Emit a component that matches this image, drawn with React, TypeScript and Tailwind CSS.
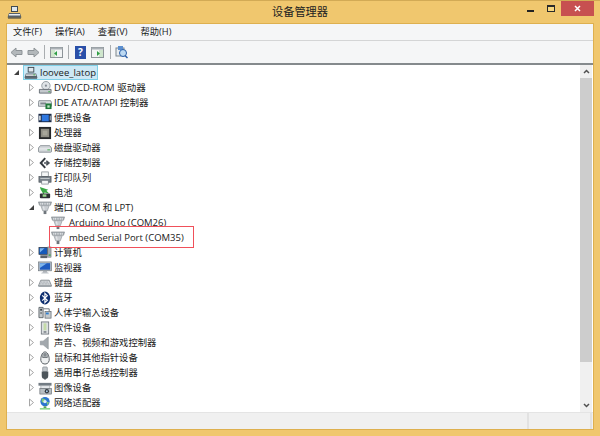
import type { ReactNode } from "react";

const uiFont = "font-['Open_Sans','Noto_Sans_CJK_SC',sans-serif]";

type IconName =
  | "computer" | "dvd" | "ide" | "portable" | "cpu" | "disk" | "storage" | "printer" | "battery"
  | "port" | "pc" | "monitor" | "keyboard" | "bluetooth" | "hid" | "software" | "sound" | "mouse"
  | "usb" | "imaging" | "network";

function TreeIcon({ name }: { name: IconName }) {
  const body = () => {
    switch (name) {
      case "computer":
        return (
          <>
            <rect x="4.500" y="1.500" width="6" height="5" fill="#dfe8ee" stroke="#3f4a52" />
            <path d="M2 8h11l1.500 4.500H.5z" fill="#56616a" />
            <rect x="2" y="9" width="11" height="1.500" fill="#e9edf0" />
            <rect x="10" y="9" width="2" height="1" fill="#3fae49" />
            <rect x="1" y="12.500" width="13" height="1" fill="#2e363c" />
          </>
        );
      case "dvd":
        return (
          <>
            <circle cx="8.500" cy="5" r="4.500" fill="#dfe3e6" stroke="#7d868d" strokeWidth=".8" />
            <circle cx="8.500" cy="5" r="1.200" fill="#868e95" />
            <path d="M1.500 9h12.500v4H1.500z" fill="#c3c8cc" stroke="#4d555c" strokeWidth=".8" />
            <rect x="11" y="11" width="2" height="1" fill="#3fae49" />
          </>
        );
      case "ide":
        return (
          <>
            <path d="M1 5h12.500l1 2v4H.5V7z" fill="#d8dcdf" stroke="#6f777e" strokeWidth=".8" />
            <rect x="2.500" y="7" width="6" height="2" fill="#7f878e" />
            <rect x="8" y="8" width="6.500" height="6" fill="#1f7a3a" />
            <rect x="10" y="10" width="2.500" height="2.500" fill="#bfe6c5" />
          </>
        );
      case "portable":
        return (
          <>
            <rect x=".5" y="3" width="14" height="9" fill="#1b2a47" />
            <rect x="4" y="4" width="7.500" height="7" fill="#2f78e0" />
            <rect x="1" y="5" width="2" height="5" fill="#c3cbd2" />
            <rect x="12.500" y="5" width="1.500" height="5" fill="#8e98a1" />
          </>
        );
      case "cpu":
        return (
          <>
            <rect x="1" y="1" width="13" height="13" fill="#26282a" />
            <rect x="3" y="3" width="9" height="9" fill="#8f8e84" />
            <rect x="5" y="5" width="5" height="5" fill="#a7a69a" />
          </>
        );
      case "disk":
        return (
          <>
            <path d="M2.500 5h10l2 2.500V11a1 1 0 0 1-1 1h-12a1 1 0 0 1-1-1V7.500z" fill="#d3d7da" stroke="#737b82" strokeWidth=".8" />
            <rect x="1.500" y="8" width="12" height="1" fill="#eef0f2" />
            <rect x="10" y="9" width="3" height="1" fill="#3fae49" />
          </>
        );
      case "storage":
        return (
          <>
            <path d="M7 1.500 1.500 7.500 7 13.500l1.500-1.500-4-4.500 4-4.500z" fill="#343a40" />
            <path d="M9.500 4.500 13 7.500l-3.500 3-1.200-1.200 1.200-.9H6.500v-1.800h3l-1.200-.9z" fill="#4a5158" />
          </>
        );
      case "printer":
        return (
          <>
            <rect x="4" y="1" width="7" height="5" fill="#f4f6f7" stroke="#6f777e" strokeWidth=".7" />
            <rect x="1" y="6" width="13" height="6" fill="#78818a" stroke="#454c52" strokeWidth=".7" />
            <rect x="2.500" y="7.500" width="10" height="1" fill="#c5cacd" />
            <rect x="4" y="10" width="7" height="4" fill="#f4f6f7" stroke="#6f777e" strokeWidth=".7" />
          </>
        );
      case "battery":
        return (
          <>
            <path d="M2 1l9 3-2 1 3 3-5-1-1 2-3-5z" fill="#3aa845" />
            <rect x="2" y="8" width="11" height="5" rx="1" fill="#2c3034" />
            <rect x="5" y="9" width="4" height="2.500" fill="#9ad88e" />
          </>
        );
      case "port":
        return (
          <>
            <path d="M.5 1h14l-1 3.500h-12z" fill="#a8aeb3" stroke="#7a8187" strokeWidth=".6" />
            <path d="M3 2v2M5 2v2M7.500 2v2M10 2v2M12 2v2" stroke="#eceef0" strokeWidth="1" />
            <path d="M3 5h9l-2 5.500H5z" fill="#c9cdd1" stroke="#868d93" strokeWidth=".6" />
            <path d="M5.500 6h1l.5 4h-.8z" fill="#eef0f2" />
            <rect x="6" y="10.500" width="3" height="3.500" fill="#6f767c" />
          </>
        );
      case "pc":
        return (
          <>
            <rect x="1" y="1.500" width="9" height="7.500" fill="#1559b8" stroke="#2b3137" strokeWidth=".7" />
            <path d="M2 2.500h5L2 7z" fill="#7fb6ec" />
            <rect x="10.500" y="1" width="3.500" height="11" fill="#a3aab0" stroke="#5f676e" strokeWidth=".5" />
            <rect x="2.500" y="10" width="7.500" height="3" fill="#5a6168" />
            <rect x="11.500" y="9" width="2" height="1.500" fill="#3fae49" />
          </>
        );
      case "monitor":
        return (
          <>
            <rect x=".5" y="1" width="14" height="9.500" fill="#b7bec4" stroke="#6f777e" strokeWidth=".7" />
            <rect x="2" y="2.300" width="11" height="7" fill="#1f5cc0" />
            <path d="M2 2.300h7.500L2 7.500z" fill="#7fb6ec" />
            <path d="M5.500 11h4l1 1.500h-6z" fill="#9aa1a7" />
            <rect x="3.500" y="12.500" width="8" height="1" fill="#c9cdd1" />
          </>
        );
      case "keyboard":
        return (
          <>
            <path d="M3 4.500h9l2.500 6H.5z" fill="#d8dcdf" stroke="#6f777e" strokeWidth=".8" />
            <path d="M3.500 6.500h8M2.500 8.500h10" stroke="#7d858c" strokeWidth=".8" strokeDasharray="1 .6" />
            <rect x=".5" y="10.500" width="14" height="1" fill="#8b939a" />
          </>
        );
      case "bluetooth":
        return (
          <>
            <ellipse cx="7.500" cy="7.500" rx="5.500" ry="7" fill="#0f2f70" />
            <path d="M4.500 4.700 10 10l-2.600 2.600V2.400L10 5l-5.500 5.300" fill="none" stroke="#fff" strokeWidth="1.200" />
          </>
        );
      case "hid":
        return (
          <>
            <path d="M1 1.500h4.500v11H1z" fill="#c5cacd" stroke="#454c52" strokeWidth=".8" />
            <rect x="2.300" y="3" width="2" height="2" fill="#3d444a" />
            <rect x="2.300" y="7" width="2" height="1" fill="#3d444a" />
            <rect x="7.500" y="6" width="6.500" height="7" fill="#c5cacd" stroke="#565d63" strokeWidth=".7" />
            <rect x="8.500" y="7" width="3" height="2" fill="#2f7fd0" />
            <path d="M6 3h6v3" fill="none" stroke="#6a7178" />
          </>
        );
      case "software":
        return (
          <>
            <rect x="3.500" y="1" width="8" height="13" fill="#dde0e3" stroke="#5f676e" strokeWidth=".8" />
            <rect x="6" y="2.500" width="3" height="7.500" fill="#c4dba8" />
            <rect x="6" y="11" width="3" height="1.500" fill="#6f777d" />
          </>
        );
      case "sound":
        return <path d="M2.500 5.500h3l5.500-4.500v13l-5.500-4.500h-3z" fill="#a2a8ad" stroke="#858c92" strokeWidth=".6" />;
      case "mouse":
        return (
          <>
            <path d="M7.500 1C5 1 3.500 4 3 8c-.4 3 1 6 4.500 6s4.900-3 4.500-6c-.5-4-2-7-4.500-7z" fill="#eef0f1" stroke="#3f464c" strokeWidth=".9" />
            <path d="M5.500 2.500 5 7h5l-.5-4.500" fill="#c5cacd" stroke="#3f464c" strokeWidth=".7" />
            <rect x="7" y="2" width="1" height="4" fill="#3f464c" />
          </>
        );
      case "usb":
        return (
          <>
            <rect x="5" y="1" width="5" height="5" rx="1" fill="#c1c6ca" stroke="#6f777d" strokeWidth=".6" />
            <path d="M4 6h7v4.500a3.500 3.500 0 0 1-7 0z" fill="#4d555b" />
            <rect x="7" y="13" width="1" height="2" fill="#4d555b" />
          </>
        );
      case "imaging":
        return (
          <>
            <path d="M.5 2h14v3H.5z" fill="#737c84" />
            <path d="M3 5h9.500v3H3z" fill="#e9ecee" stroke="#80878d" strokeWidth=".5" />
            <rect x="2" y="8" width="12.500" height="6" fill="#b8bec2" stroke="#565d63" strokeWidth=".6" />
            <circle cx="9.500" cy="11" r="2.300" fill="#30363c" />
            <circle cx="9.500" cy="11" r="1" fill="#a9c9e6" />
          </>
        );
      case "network":
        return (
          <>
            <circle cx="7.500" cy="6" r="5" fill="#2a74d0" />
            <path d="M4 2.500l4 1-1 4-3-1zM9 6l3 1-2 3z" fill="#7fc87a" />
            <circle cx="7.500" cy="6" r="1.800" fill="#dfeefb" />
            <rect x="6" y="11" width="3" height="2" fill="#5c9e5a" />
            <rect x="2" y="13" width="11" height="1.500" fill="#7ccf7a" />
          </>
        );
    }
  };
  return (
    <svg width="14" height="14" viewBox="0 0 15 15" className="shrink-0">
      {body()}
    </svg>
  );
}

function Expander({ open }: { open?: boolean }) {
  return open ? (
    <svg width="7" height="7" viewBox="0 0 7 7" className="shrink-0">
      <path d="M6 1v5H1z" fill="#404040" />
    </svg>
  ) : (
    <svg width="7" height="9" viewBox="0 0 7 9" className="shrink-0">
      <path d="M1.500 1 5.500 4.500 1.500 8z" fill="#fff" stroke="#a6a6a6" />
    </svg>
  );
}

function Row({ icon, label, open, latin }: { icon: IconName; label: string; open?: boolean; latin?: boolean }) {
  return (
    <div className="flex h-[15px] items-center pl-[15px]">
      <div className="flex w-[14px] shrink-0 justify-center">
        <Expander open={open} />
      </div>
      <TreeIcon name={icon} />
      <span className={`ml-[2px] whitespace-nowrap leading-[15px] text-[#1a1a1a] ${latin ? "text-[9.500px]" : "text-[9.300px]"}`}>{label}</span>
    </div>
  );
}

function Child({ label }: { label: string }) {
  return (
    <div className="flex h-[15px] items-center pl-[42px]">
      <TreeIcon name="port" />
      <span className="ml-[4px] whitespace-nowrap text-[9.500px] leading-[15px] text-[#1a1a1a]">{label}</span>
    </div>
  );
}

function ToolIcon({ children, w = 13 }: { children: ReactNode; w?: number }) {
  return (
    <svg width={w} height="13" viewBox={`0 0 ${w} 13`} className="shrink-0">
      {children}
    </svg>
  );
}

const PanelIcon = ({ right }: { right?: boolean }) => (
  <ToolIcon>
    <rect x=".5" y="1.500" width="12" height="10" fill="#f2f4f5" stroke="#8d9499" />
    <rect x=".5" y="1.500" width="12" height="2" fill="#aab0b5" />
    <rect x={right ? 8 : 1} y="4" width="4" height="7" fill="#cfe6cc" />
    <path d={right ? "M6 5l3 2.500L6 10z" : "M7 5 4 7.500 7 10z"} fill="#2f9e44" />
  </ToolIcon>
);

export default function App() {
  return (
    <div className={`flex h-[436px] w-[600px] flex-col overflow-hidden border-t border-[#d2aa55] bg-[#f0c76e] ${uiFont}`}>
      {/* title bar */}
      <div className="grid h-[22px] shrink-0 grid-cols-[1fr_auto_1fr] items-start">
        <svg width="15" height="14" viewBox="0 0 15 14" className="ml-[7px] mt-[5px]">
          <rect x="4.500" y=".5" width="6" height="5" fill="#dfe8ee" stroke="#3f4a52" />
          <path d="M2 7h11l1.500 4.500H.5z" fill="#56616a" />
          <rect x="2" y="8" width="11" height="1.500" fill="#e9edf0" />
          <rect x="1" y="11.500" width="13" height="1" fill="#2e363c" />
        </svg>
        <div className="pt-[2px] text-center text-[11.200px] leading-[17px] text-[#222]">设备管理器</div>
        <div className="flex items-start justify-end">
          <div className="mt-[9px] h-[2px] w-[7px] bg-[#222]" />
          <div className="ml-[13px] mt-[4px] h-[7px] w-[8px] border border-t-2 border-[#2a2a2a] bg-[#f6d77f]" />
          <div className="ml-[6px] mr-[6px] flex h-[15px] w-[33px] items-center justify-center bg-[#c75050]">
            <svg width="7" height="7" viewBox="0 0 7 7">
              <path d="M1 1l5 5M6 1 1 6" stroke="#fff" strokeWidth="1.500" />
            </svg>
          </div>
        </div>
      </div>

      {/* client area */}
      <div className="mx-[6px] flex min-h-0 flex-1 flex-col border border-[#deb04f] bg-[#f5f6f7]">
        <div className="flex h-[16px] shrink-0 items-center gap-[13px] pl-[6px] text-[9.300px] text-[#1a1a1a]">
          <span>文件(F)</span>
          <span>操作(A)</span>
          <span>查看(V)</span>
          <span>帮助(H)</span>
        </div>
        <div className="h-[1px] shrink-0 bg-[#d4d5d6]" />
        <div className="flex h-[22px] shrink-0 items-center pl-[3px]">
          <ToolIcon>
            <path d="M1 6.500 6 2v2.500h6v4H6V11z" fill="#b3b8bb" stroke="#8d9397" />
          </ToolIcon>
          <div className="ml-[4px]">
            <ToolIcon>
              <path d="M12 6.500 7 2v2.500H1v4h6V11z" fill="#b3b8bb" stroke="#8d9397" />
            </ToolIcon>
          </div>
          <div className="ml-[4px] h-[14px] w-[1px] bg-[#a9adb0]" />
          <div className="ml-[5px]"><PanelIcon /></div>
          <div className="ml-[5px] h-[14px] w-[1px] bg-[#a9adb0]" />
          <div className="ml-[6px] flex h-[13px] w-[11px] items-center justify-center bg-[#2a4fa8] text-[10px] font-bold leading-none text-white">?</div>
          <div className="ml-[5px]"><PanelIcon right /></div>
          <div className="ml-[6px] h-[14px] w-[1px] bg-[#a9adb0]" />
          <div className="ml-[4px]">
            <ToolIcon>
              <rect x="1" y="2" width="8" height="8" fill="#e8edf1" stroke="#7d858c" />
              <rect x="3" y="0" width="5" height="4" fill="#5b8fd0" />
              <circle cx="8" cy="7" r="3.500" fill="#bcd9f2" stroke="#2b5fa8" />
              <path d="M10 9.500 12.500 12" stroke="#2b5fa8" strokeWidth="1.500" />
            </ToolIcon>
          </div>
        </div>

        {/* tree view */}
        <div className="flex min-h-0 flex-1 border-t-2 border-[#858a8d] bg-white">
          <div className="relative min-w-0 flex-1 pl-[2px]">
            <div className="flex h-[15px] items-center">
              <div className="flex w-[14px] justify-center">
                <Expander open />
              </div>
              <div className="flex h-[15px] items-center border border-[#7fd0e8] bg-[#cde8f5] pr-[1px]">
                <TreeIcon name="computer" />
                <span className="ml-[2px] text-[9.500px] leading-[13px] text-[#1a1a1a]">loovee_latop</span>
              </div>
            </div>
            <Row icon="dvd" label="DVD/CD-ROM 驱动器" latin />
            <Row icon="ide" label="IDE ATA/ATAPI 控制器" latin />
            <Row icon="portable" label="便携设备" />
            <Row icon="cpu" label="处理器" />
            <Row icon="disk" label="磁盘驱动器" />
            <Row icon="storage" label="存储控制器" />
            <Row icon="printer" label="打印队列" />
            <Row icon="battery" label="电池" />
            <Row icon="port" label="端口 (COM 和 LPT)" open latin />
            <Child label="Arduino Uno (COM26)" />
            <Child label="mbed Serial Port (COM35)" />
            <Row icon="pc" label="计算机" />
            <Row icon="monitor" label="监视器" />
            <Row icon="keyboard" label="键盘" />
            <Row icon="bluetooth" label="蓝牙" />
            <Row icon="hid" label="人体学输入设备" />
            <Row icon="software" label="软件设备" />
            <Row icon="sound" label="声音、视频和游戏控制器" />
            <Row icon="mouse" label="鼠标和其他指针设备" />
            <Row icon="usb" label="通用串行总线控制器" />
            <Row icon="imaging" label="图像设备" />
            <Row icon="network" label="网络适配器" />
            {/* red annotation around the mbed row */}
            <div className="absolute left-[42px] top-[161px] h-[22px] w-[145px] border border-[#f0505a]" />
          </div>
          {/* scrollbar */}
          <div className="mr-[1px] flex w-[12px] shrink-0 flex-col bg-[#f0f0f0]">
            <div className="flex h-[13px] shrink-0 items-center justify-center">
              <svg width="7" height="5" viewBox="0 0 7 5">
                <path d="M1 4l2.500-2.500L6 4" fill="none" stroke="#505050" strokeWidth="1.500" />
              </svg>
            </div>
            <div className="h-[284px] shrink-0 bg-[#cdcdcd]" />
            <div className="flex flex-1 items-end justify-center pb-[4px]">
              <svg width="7" height="5" viewBox="0 0 7 5">
                <path d="M1 1l2.500 2.500L6 1" fill="none" stroke="#505050" strokeWidth="1.500" />
              </svg>
            </div>
          </div>
        </div>

        {/* status bar */}
        <div className="flex h-[17px] shrink-0 justify-end border-t border-[#e4e4e4] bg-[#f0f0f0]">
          <div className="h-full w-[2px] bg-[#e2e2e2]" />
          <div className="w-[61px]" />
          <div className="h-full w-[2px] bg-[#e2e2e2]" />
          <div className="w-[1px]" />
        </div>
      </div>
      <div className="h-[6px] shrink-0" />
    </div>
  );
}
